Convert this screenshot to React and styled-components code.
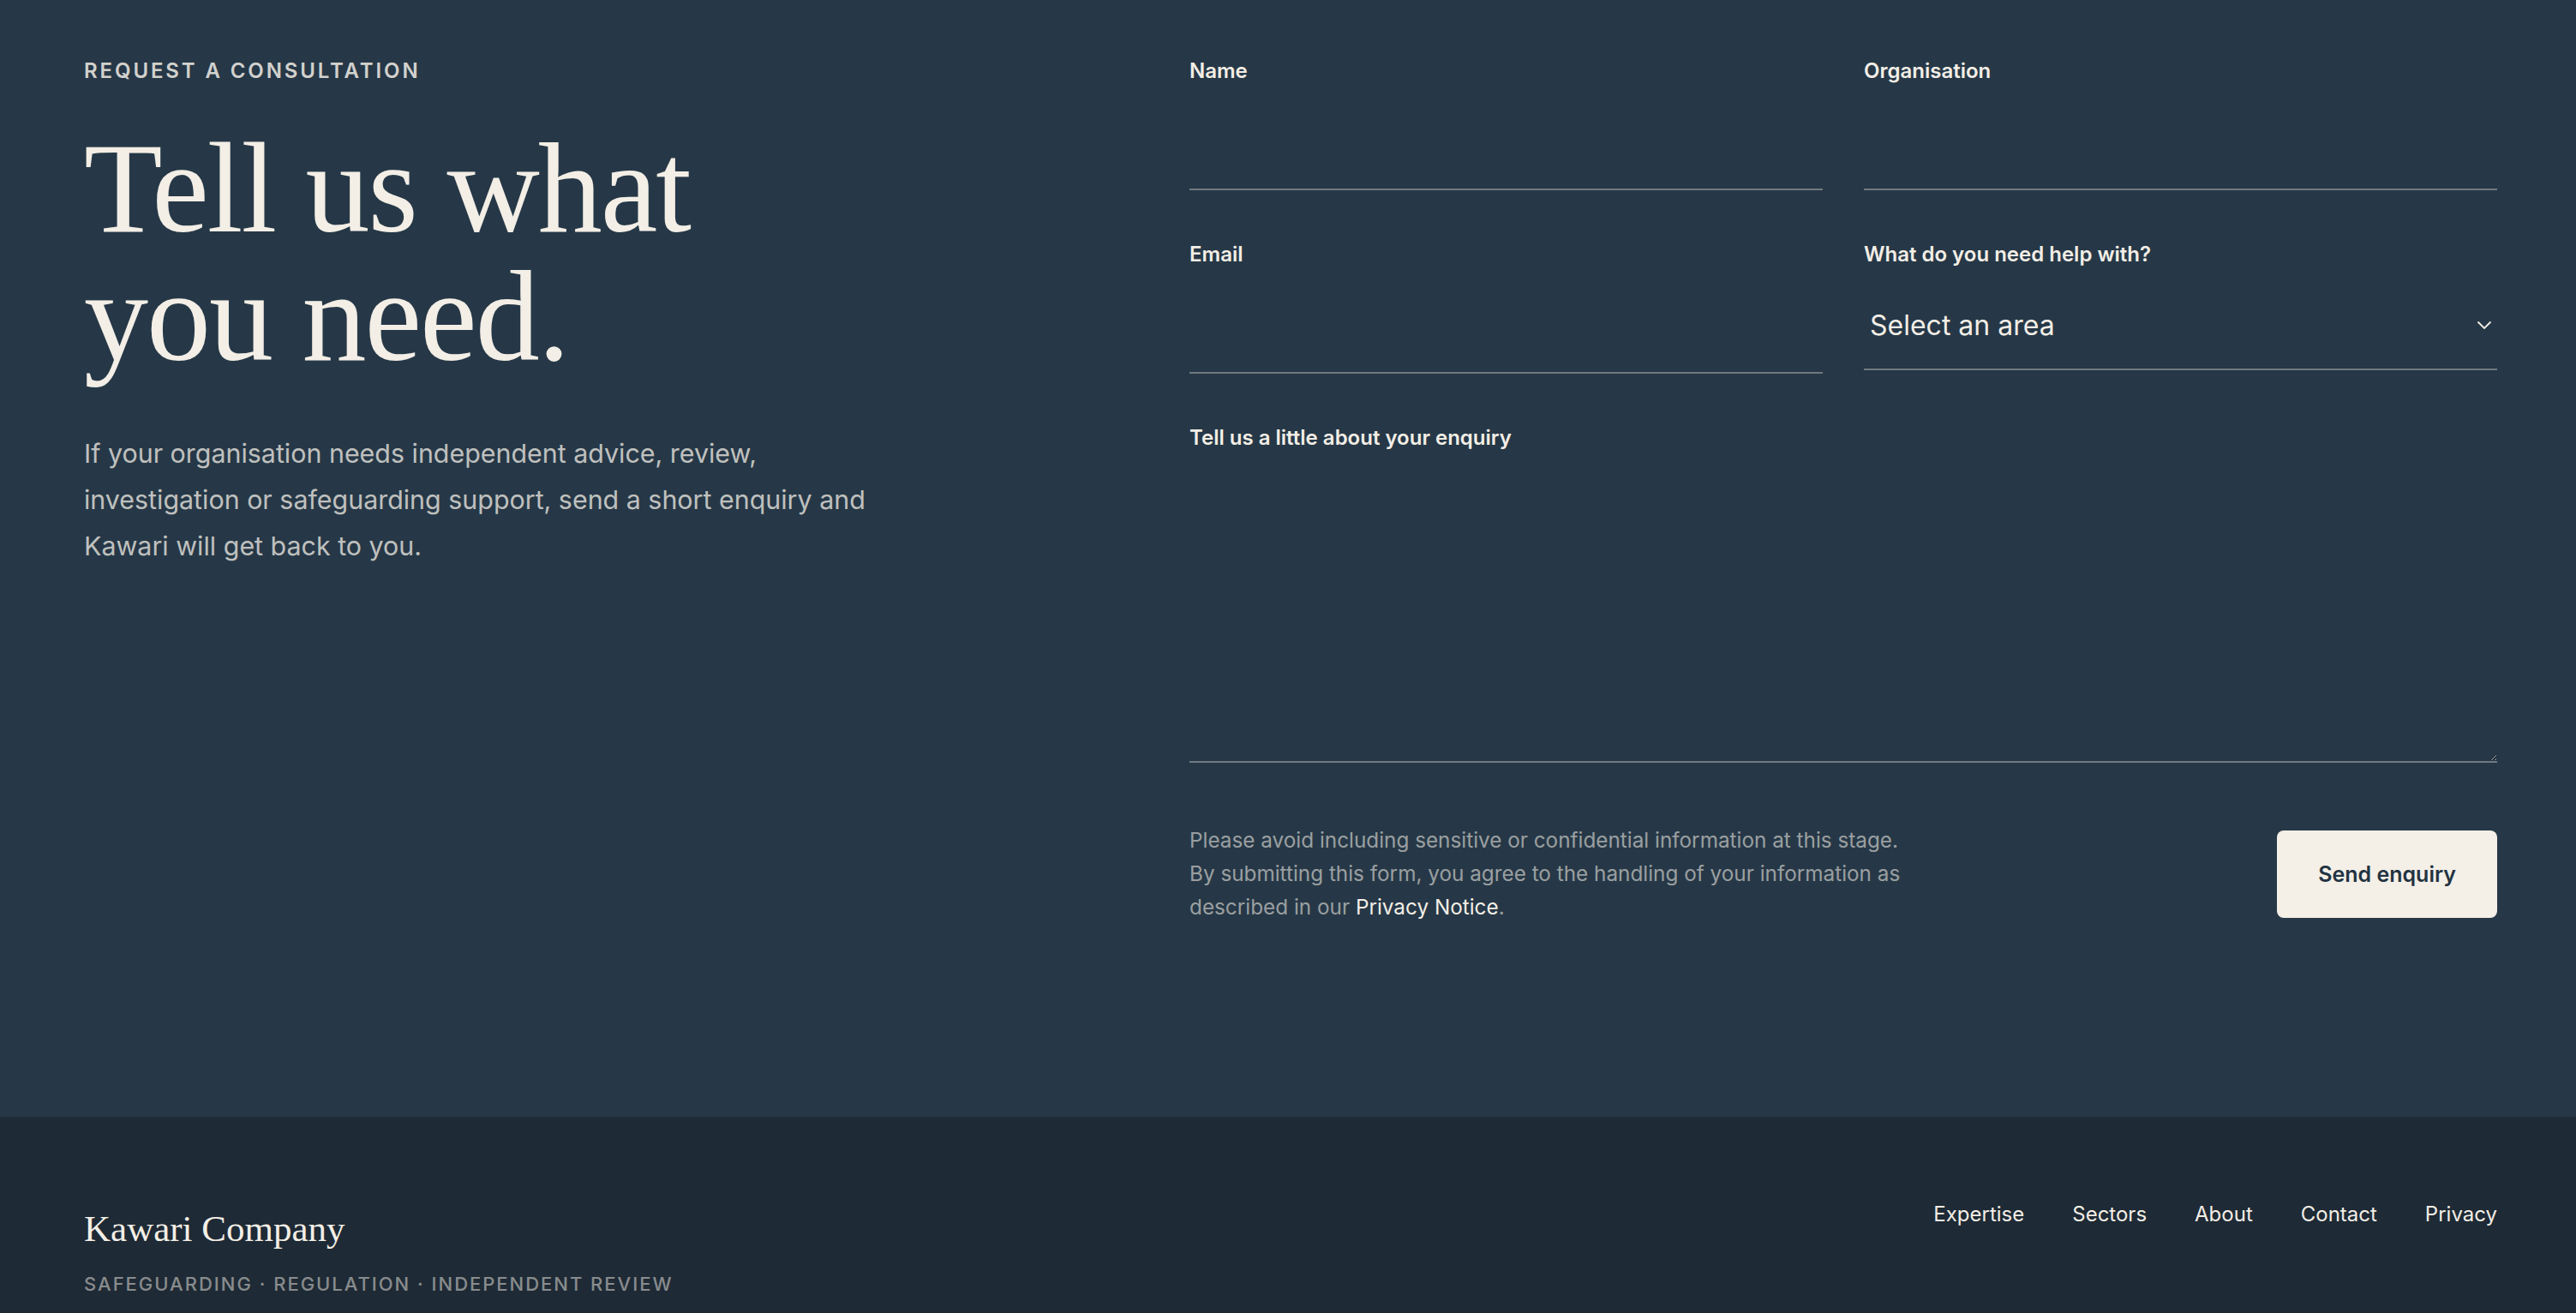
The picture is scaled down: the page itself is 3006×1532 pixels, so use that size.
import { createGlobalStyle, styled } from 'styled-components'

const cream = '#f3eee6'

const GlobalStyle = createGlobalStyle`
  * { box-sizing: border-box; }
  html, body { margin: 0; padding: 0; background: #263847; }
  body { font-family: Inter, 'Liberation Sans', sans-serif; color: ${cream}; }
`

function App() {
  return (
    <>
      <GlobalStyle />
      <ContactSection>
        <Intro>
          <Eyebrow>Request a consultation</Eyebrow>
          <Heading>
            Tell us what
            <br />
            you need.
          </Heading>
          <Lead>
            If your organisation needs independent advice, review, investigation or
            safeguarding support, send a short enquiry and Kawari will get back to you.
          </Lead>
        </Intro>

        <Form onSubmit={(e) => e.preventDefault()}>
          <Fields>
            <Field>
              <Label htmlFor='name'>Name</Label>
              <Input id='name' type='text' />
            </Field>
            <Field>
              <Label htmlFor='org'>Organisation</Label>
              <Input id='org' type='text' />
            </Field>
            <Field>
              <Label htmlFor='email'>Email</Label>
              <Input id='email' type='email' />
            </Field>
            <Field>
              <Label htmlFor='area'>What do you need help with?</Label>
              <SelectWrap>
                <Select id='area' defaultValue=''>
                  <option value=''>Select an area</option>
                  <option>Safeguarding</option>
                  <option>Regulation</option>
                  <option>Independent review</option>
                </Select>
                <Chevron width='18' height='11' viewBox='0 0 18 11'>
                  <polyline points='1.5,1.5 9,9 16.5,1.5' />
                </Chevron>
              </SelectWrap>
            </Field>
            <Field $wide>
              <Label htmlFor='msg'>Tell us a little about your enquiry</Label>
              <TextArea id='msg' />
            </Field>
          </Fields>

          <SubmitRow>
            <Notice>
              Please avoid including sensitive or confidential information at this stage.
              By submitting this form, you agree to the handling of your information as
              described in our <a href='#privacy'>Privacy Notice</a>.
            </Notice>
            <SendButton type='submit'>Send enquiry</SendButton>
          </SubmitRow>
        </Form>
      </ContactSection>

      <Footer>
        <Brand>
          <BrandName>Kawari Company</BrandName>
          <Tagline>Safeguarding · Regulation · Independent review</Tagline>
        </Brand>
        <FooterNav>
          {['Expertise', 'Sectors', 'About', 'Contact', 'Privacy'].map((item) => (
            <a key={item} href={`#${item.toLowerCase()}`}>
              {item}
            </a>
          ))}
        </FooterNav>
      </Footer>
    </>
  )
}

export default App

const ContactSection = styled.section`
  display: grid;
  grid-template-columns: minmax(0, 1fr) 1526px;
  padding: 68px 92px 225px 98px;
  background: #263847;
`

const Intro = styled.div`
  display: flex;
  flex-direction: column;
  align-items: flex-start;
`

const Eyebrow = styled.p`
  margin: 0 0 47px;
  font-size: 24px;
  line-height: 29px;
  font-weight: 600;
  letter-spacing: 0.12em;
  text-transform: uppercase;
  color: rgba(243, 238, 230, 0.86);
`

const Heading = styled.h1`
  margin: 0;
  font-family: 'Liberation Serif', 'Times New Roman', serif;
  font-weight: 400;
  font-size: 150px;
  line-height: 150px;
  letter-spacing: -2px;
  color: ${cream};
`

const Lead = styled.p`
  margin: 58px 0 0;
  max-width: 950px;
  font-size: 30.4px;
  line-height: 54px;
  color: rgba(243, 238, 230, 0.76);
`

const Form = styled.form`
  display: flex;
  flex-direction: column;
`

const Fields = styled.div`
  display: grid;
  grid-template-columns: 1fr 1fr;
  column-gap: 48px;
  row-gap: 60px;
`

const Field = styled.div`
  display: flex;
  flex-direction: column;
  grid-column: ${(p) => (p.$wide ? '1 / -1' : 'auto')};
`

const Label = styled.label`
  margin-bottom: 12px;
  font-size: 24px;
  line-height: 29px;
  font-weight: 600;
  color: ${cream};
`

const fieldBase = `
  width: 100%;
  background: transparent;
  border: none;
  border-bottom: 2px solid rgba(243, 238, 230, 0.36);
  border-radius: 0;
  color: ${cream};
  font-family: Inter, 'Liberation Sans', sans-serif;
  font-size: 32px;
  outline: none;
`

const Input = styled.input`
  ${fieldBase}
  height: 113px;
  padding: 0 8px;
`

const SelectWrap = styled.div`
  position: relative;
`

const Select = styled.select`
  ${fieldBase}
  height: 109px;
  padding: 6px 48px 0 7px;
  appearance: none;
  cursor: pointer;

  & option {
    color: #1e2a35;
  }
`

const Chevron = styled.svg`
  position: absolute;
  right: 6px;
  top: 51px;
  fill: none;
  stroke: ${cream};
  stroke-width: 1.8;
  pointer-events: none;
`

const TextArea = styled.textarea`
  ${fieldBase}
  height: 353px;
  padding: 12px 8px;
  resize: vertical;
`

const SubmitRow = styled.div`
  display: flex;
  align-items: center;
  justify-content: space-between;
  margin-top: 71px;
`

const Notice = styled.p`
  margin: 0;
  max-width: 852px;
  font-size: 24.3px;
  line-height: 39px;
  color: rgba(243, 238, 230, 0.58);

  & a {
    color: ${cream};
    text-decoration: none;
  }
`

const SendButton = styled.button`
  height: 102px;
  padding: 0 48px;
  border: none;
  border-radius: 8px;
  background: #f4efe7;
  color: #233342;
  font-family: Inter, 'Liberation Sans', sans-serif;
  font-size: 25px;
  font-weight: 600;
  cursor: pointer;
`

const Footer = styled.footer`
  display: flex;
  justify-content: space-between;
  align-items: flex-start;
  padding: 99px 92px 100px 98px;
  background: #1e2a35;
`

const Brand = styled.div`
  display: flex;
  flex-direction: column;
  padding-top: 10px;
`

const BrandName = styled.div`
  font-family: 'Liberation Serif', 'Times New Roman', serif;
  font-size: 43px;
  line-height: 43px;
  color: ${cream};
`

const Tagline = styled.div`
  margin-top: 30px;
  font-size: 22px;
  line-height: 26px;
  font-weight: 500;
  letter-spacing: 0.09em;
  text-transform: uppercase;
  color: rgba(243, 238, 230, 0.5);
`

const FooterNav = styled.nav`
  display: flex;
  gap: 56px;

  & a {
    font-size: 24px;
    line-height: 30px;
    color: ${cream};
    text-decoration: none;
  }
`
